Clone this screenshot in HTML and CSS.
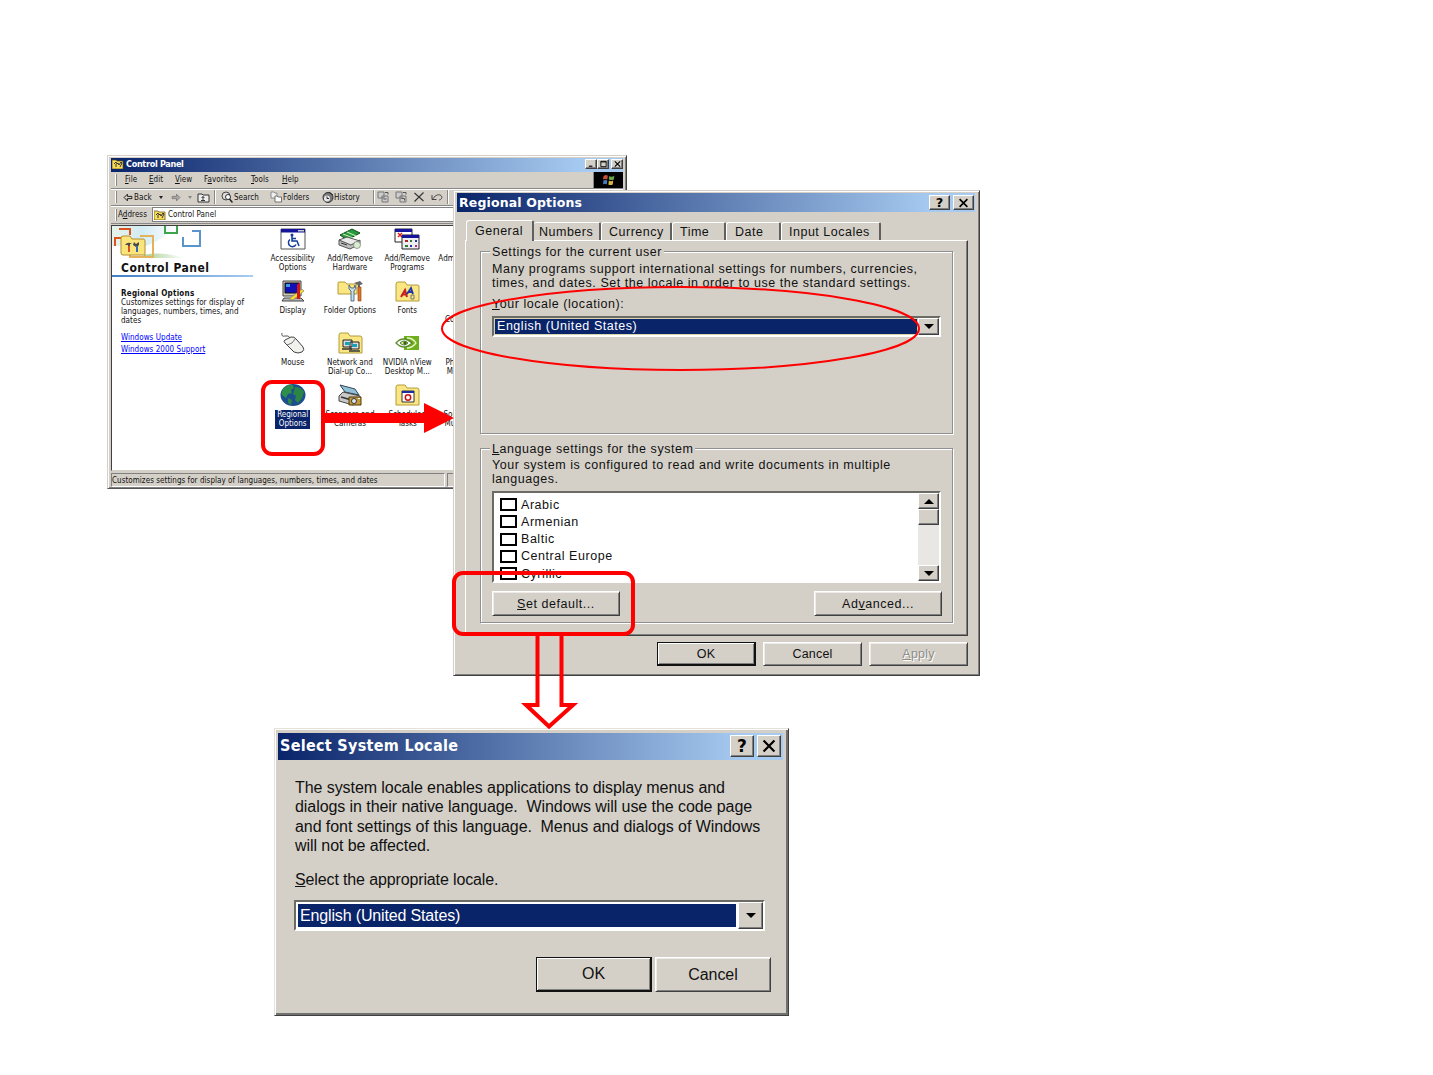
FILE: index.html
```html
<!DOCTYPE html>
<html lang="en">
<head>
  <meta charset="UTF-8">
  <title>Regional Options</title>
  <link rel="stylesheet" href="styles.css">
</head>
<body>

  <!-- Control Panel window -->
  <div class="window panel">
    <div class="titlebar">
      <svg class="title-icon" viewBox="0 0 12 10"><path d="M0 1h4l1 1h6v8H0z" fill="#f7dc5a" stroke="#5b4a10" stroke-width=".7"/><path d="M2 5l2-2 1 2 1-1 1 2 2-3 1 1-2 4M4 5v3" fill="none" stroke="#333"/></svg>
      <span class="title">Control Panel</span>
      <div class="win-buttons">
        <span class="wbtn"><svg viewBox="0 0 10 9"><path d="M2 7h4" stroke="#000" stroke-width="1.300"/></svg></span>
        <span class="wbtn"><svg viewBox="0 0 10 9"><path d="M2 1.500h6v6H2zM2 2.200h6" fill="none" stroke="#000"/></svg></span>
        <span class="wbtn close"><svg viewBox="0 0 10 9"><path d="M2 1.500l6 6M8 1.500l-6 6" stroke="#000" stroke-width="1.300"/></svg></span>
      </div>
    </div>
    <div class="menu-row">
      <div class="menubar">
        <i class="grip"></i>
        <span class="m-file"><u>F</u>ile</span><span class="m-edit"><u>E</u>dit</span><span class="m-view"><u>V</u>iew</span><span class="m-fav">F<u>a</u>vorites</span><span class="m-tools"><u>T</u>ools</span><span><u>H</u>elp</span>
      </div>
      <div class="brand"><svg viewBox="0 0 16 12"><path d="M2 3q2-2 4-.5L5.500 6q-2-1-4 0z" fill="#c8503c"/><path d="M7 3q3 1 5-.5L11.500 6q-2 1-4.500 0z" fill="#6aa84a"/><path d="M2 7q2-1 3.500 0L5 10.500q-2-1-3.500 0z" fill="#4a7cc8"/><path d="M7 7q2 1 4 0l-.5 3.500q-2 1-4 0z" fill="#d8b840"/></svg></div>
    </div>
    <div class="toolbar">
      <i class="grip"></i>
      <span class="tool back"><svg class="ic9" viewBox="0 0 9 8"><path d="M4 1L1 4l3 3V5h4V3H4z" fill="none" stroke="#222" stroke-width=".9"/></svg>Back <b class="tri"></b></span>
      <span class="tool fwd"><svg class="ic9" viewBox="0 0 9 8"><path d="M5 1l3 3-3 3V5H1V3h4z" fill="#aaa" stroke="#666" stroke-width=".6"/></svg><b class="tri dim"></b></span>
      <svg class="up" viewBox="0 0 13 11"><path d="M1 2h4l1 1h6v7H1z" fill="#eee" stroke="#333"/><path d="M4 8.500h4M6 8.500V4.500M4.500 6L6 4.500 7.500 6" fill="none" stroke="#222" stroke-width=".9"/></svg>
      <i class="sep"></i>
      <span class="tool search"><svg class="ic12" viewBox="0 0 12 12"><circle cx="5" cy="5" r="4" fill="#ddd" stroke="#444"/><circle cx="7" cy="6" r="2.500" fill="#fff" stroke="#333"/><path d="M8.500 8l3 3.500" stroke="#222" stroke-width="1.500"/></svg>Search</span>
      <span class="tool folders"><svg class="ic12" viewBox="0 0 12 12"><path d="M1 1h3l1 1h2v5H1z" fill="#eee" stroke="#777" stroke-width=".8"/><path d="M5 5h2l1 1h3.500v5H5z" fill="#fff" stroke="#555" stroke-width=".8"/></svg>Folders</span>
      <span class="tool history"><svg class="ic12" viewBox="0 0 12 12"><circle cx="6" cy="6.500" r="5" fill="#777" stroke="#333"/><circle cx="5" cy="7.500" r="3" fill="#e8e8e8"/><path d="M5 5.500v2h2M7 1l4 3" fill="none" stroke="#222"/></svg>History</span>
      <i class="sep"></i>
      <svg class="ic12 t1" viewBox="0 0 12 12"><path d="M1 1h6v6H1zM5 5h6v6H5z" fill="#ccc" stroke="#777"/><path d="M6.500 8h3M8 1.500h3v2" fill="none" stroke="#555"/></svg>
      <svg class="ic12 t2" viewBox="0 0 12 12"><path d="M1 1h6v6H1zM5 5h6v6H5z" fill="#ccc" stroke="#777"/><path d="M6.500 7.500h3v2M8 1.500h3v2" fill="none" stroke="#555"/></svg>
      <svg class="ic12 t3" viewBox="0 0 12 12"><path d="M1.500 2l9 8M10.500 1.500l-9 9" stroke="#333" stroke-width="1.100"/></svg>
      <svg class="ic12 t4" viewBox="0 0 12 12"><path d="M1 4v4.500h4.500M1.500 8C5 3.500 8 3 10 4.500c2 2 0 4.500-2 4.500" fill="none" stroke="#444"/></svg>
      <i class="sep"></i>
    </div>
    <div class="address">
      <i class="grip"></i>
      <span class="addr-label">A<u>d</u>dress</span>
      <div class="addr-box">
        <svg class="title-icon" viewBox="0 0 12 10"><path d="M0 1h4l1 1h6v8H0z" fill="#f7dc5a" stroke="#5b4a10" stroke-width=".7"/><path d="M2 5l2-2 1 2 1-1 1 2 2-3 1 1-2 4M4 5v3" fill="none" stroke="#333"/></svg>
        Control Panel
      </div>
    </div>
    <div class="content">
      <div class="side">
        <svg class="banner" viewBox="0 0 142 34">
          <defs>
            <linearGradient id="sky" x1="0" x2="1"><stop offset="0" stop-color="#e6f3ea"/><stop offset=".45" stop-color="#d3ebf3"/><stop offset="1" stop-color="#fff"/></linearGradient>
            <linearGradient id="leaf" x1="0" x2="1"><stop offset="0" stop-color="#a9cf94"/><stop offset="1" stop-color="#fff"/></linearGradient>
          </defs>
          <path d="M0 0h66q-16 14-32 20H0z" fill="url(#sky)"/>
          <path d="M32 29q18-4 40 3H32z" fill="url(#leaf)"/>
          <path d="M3 20V12h8M8 4V2M8 3h10v6" fill="none" stroke="#d9541e" stroke-width="2"/>
          <path d="M53 0v7h12V0" fill="none" stroke="#3fa54c" stroke-width="2"/>
          <path d="M80 5h8v15H71v-9" fill="none" stroke="#5a94cd" stroke-width="2"/>
          <path d="M28 10h13v21H18v-5" fill="none" stroke="#e3b35c" stroke-width="2"/>
          <path d="M9 12q0-2 2-2h7l2 3h11q2 0 2 2v14H11q-2 0-2-2z" fill="#fae47c" stroke="#b68e2c"/>
          <path d="M13 19q3-4 7-1h-2v3h-2v-2zM22 16l2 2 3-2v3l-2 2h-1l-3-2z" fill="#4a4a4a"/>
          <path d="M17 20v6" stroke="#d9541e" stroke-width="2"/><path d="M25 20v6" stroke="#3a68b0" stroke-width="2"/>
        </svg>
        <div class="side-title">Control Panel</div>
        <div class="side-line"></div>
        <div class="side-text"><b>Regional Options</b><br>Customizes settings for display of<br>languages, numbers, times, and<br>dates</div>
        <div class="side-links"><a>Windows Update</a><a>Windows 2000 Support</a></div>
      </div>
      <div class="icons">
        <div class="item"><svg viewBox="0 0 26 22"><path d="M1 1h24v20H1z" fill="#fff" stroke="#555"/><path d="M1 1h24v3.500H1z" fill="#14149c"/><path d="M18 2h6v1.500h-6z" fill="#ccc"/><circle cx="12" cy="7" r="1.500" fill="#123a9c"/><path d="M12 8v5h5l2 5M12 10.500h4M10 11.500a4 4 0 1 0 6 5" fill="none" stroke="#123a9c" stroke-width="1.500"/></svg><span>Accessibility<br>Options</span></div>
        <div class="item"><svg viewBox="0 0 26 22"><path d="M3 7L15 1l8 4-13 7z" fill="#269a3c" stroke="#154d1e"/><path d="M6 6l10 4M10 4l9 4" stroke="#bfe8b0" stroke-width="1.200"/><path d="M2 12l8-3 13 4-8 6z" fill="#e9e9e9" stroke="#555"/><path d="M2 12v5l11 4 10-5v-4l-9 5z" fill="#bdbdbd" stroke="#555"/><path d="M4 15l6 2" stroke="#333"/><circle cx="20" cy="17" r="3.500" fill="#d9eecb" stroke="#777" stroke-width=".7"/></svg><span>Add/Remove<br>Hardware</span></div>
        <div class="item"><svg viewBox="0 0 26 22"><path d="M1 1h17v13H1z" fill="#fff" stroke="#222"/><path d="M1 1h17v3H1z" fill="#14149c"/><path d="M4 5l4 4M8 5L4 9" stroke="#d22" stroke-width="1.500"/><path d="M8 7h17v14H8z" fill="#eee" stroke="#222"/><path d="M8 7h17v3H8z" fill="#14149c"/><path d="M11 12h3v2h-3z" fill="#a22"/><path d="M16 12h2v2h-2zM11 17h3v2h-3z" fill="#2a7d33"/><path d="M21 12h2v2h-2zM16 17h2v2h-2z" fill="#2432b4"/><path d="M21 17h2v2h-2z" fill="#b32a8c"/></svg><span>Add/Remove<br>Programs</span></div>
        <div class="item"><svg viewBox="0 0 26 22"><path d="M2 4h9l2 2h11v15H2z" fill="#fae784" stroke="#a89030"/></svg><span>Administrative<br>Tools</span></div>

        <div class="item"><svg viewBox="0 0 26 22"><path d="M3 1h18v15H3z" fill="#cfc9b4" stroke="#444"/><path d="M5 3h14v10H5z" fill="#1010b8" stroke="#111"/><path d="M6 4h4v3H6z" fill="#3c9be0"/><path d="M4 18h17l3 3H2z" fill="#bbb" stroke="#444"/><path d="M9 19L22 9l2 2-11 9z" fill="#f4df2c" stroke="#777" stroke-width=".6"/><path d="M17 5l3-3v17h-3z" fill="#d31818"/></svg><span>Display</span></div>
        <div class="item"><svg viewBox="0 0 26 22"><path d="M1 3q0-1 1-1h6l2 2h9q1 0 1 1v9H1z" fill="#fae784" stroke="#b39c3a"/><path d="M12 5q-1 5 2 6v10h3V11q3-2 1-6l-1 3h-3z" fill="#c7e0ee" stroke="#37506a" stroke-width=".8"/><path d="M17 3l6-2 3 3-3 1v2h-2V5z" fill="#666"/><path d="M21 7h3v14h-3z" fill="#e0742c" stroke="#8b3c0c" stroke-width=".6"/></svg><span>Folder Options</span></div>
        <div class="item"><svg viewBox="0 0 26 22"><path d="M2 4q0-2 2-2h7l2 3h10q2 0 2 1v15H2z" fill="#fae784" stroke="#b39c3a"/><path d="M7 17l4-7 2 7M8.500 14.500h4" fill="none" stroke="#c81e1e" stroke-width="2"/><path d="M13 14l4-6 2 6M14.500 12h4" fill="none" stroke="#1c36b0" stroke-width="1.800"/><path d="M17 15h3v4h-3z" fill="none" stroke="#777"/></svg><span>Fonts</span></div>
        <div class="item"><svg viewBox="0 0 26 22"><path d="M4 10h18v9H4z" fill="#bbb" stroke="#555"/></svg><span>Game<br>Controllers</span></div>

        <div class="item"><svg viewBox="0 0 26 22"><path d="M10 6Q9 3 5 4T2 1" fill="none" stroke="#555"/><path d="M5 8l6-3q3-1 6 3l6 7q2 3-1 5-4 2-8 0L5 11q-2-2 0-3z" fill="#f1f1ee" stroke="#444"/><path d="M7 13q6-1 8-6" fill="none" stroke="#777"/></svg><span>Mouse</span></div>
        <div class="item"><svg viewBox="0 0 26 22"><path d="M2 3q0-2 2-2h7l2 3h10q2 0 2 2v15H2z" fill="#fae784" stroke="#b39c3a"/><path d="M6 8h9v7H6zM13 10h9v7h-9z" fill="#ddd" stroke="#222"/><path d="M8 10h5v3H8zM15 12h5v3h-5z" fill="#18a0b4"/><path d="M5 17h10M12 19h11" stroke="#333" stroke-width="1.500"/></svg><span>Network and<br>Dial-up Co...</span></div>
        <div class="item"><svg viewBox="0 0 26 22"><path d="M10 4h15v14H10z" fill="#6fae1c"/><path d="M2 11q7-8 16 0-8 8-16 0z" fill="#fff" stroke="#5c8c2c" stroke-width="1.300"/><path d="M6 11q4-4 8 0-4 4-8 0z" fill="#d8ebb0" stroke="#54822a"/><circle cx="11" cy="11" r="1.700" fill="#3c5f16"/><path d="M13 6q6 0 9 5-4 5-9 5" fill="none" stroke="#e6f5c8" stroke-width="1.300"/></svg><span>NVIDIA nView<br>Desktop M...</span></div>
        <div class="item"><svg viewBox="0 0 26 22"><path d="M4 10h18v9H4z" fill="#bbb" stroke="#555"/></svg><span>Phone and<br>Modem ...</span></div>

        <div class="item selected"><svg viewBox="0 0 26 22"><ellipse cx="13" cy="11" rx="12.500" ry="11" fill="#1d4f8e"/><path d="M4 4q4-4 9-3l1 3-3 2 1 3-4 1-2 4-4-3q-1-4 2-7z" fill="#2e8f4a"/><path d="M15 3q6 0 9 5l-2 6-4 5-3-3 1-4-3-2 1-3z" fill="#2b8546"/><path d="M8 14l4 2-1 5-3-2z" fill="#2b8546"/></svg><span>Regional<br>Options</span></div>
        <div class="item"><svg viewBox="0 0 26 22"><path d="M3 1l15 4 4 6-14-3z" fill="#8fc1d8" stroke="#345"/><path d="M2 12l4-4 17 4v5l-7 4-14-4z" fill="#c9c9c9" stroke="#444"/><path d="M4 13l14 4" stroke="#333" stroke-width="1.500"/><path d="M12 13h12v8H12z" fill="#c79b3c" stroke="#4e3a08"/><circle cx="17" cy="17" r="2.500" fill="#dce8ee" stroke="#333"/><path d="M21 14.500h2" stroke="#fff"/></svg><span>Scanners and<br>Cameras</span></div>
        <div class="item"><svg viewBox="0 0 26 22"><path d="M2 3q0-2 2-2h7l2 3h10q2 0 2 2v15H2z" fill="#fae784" stroke="#b39c3a"/><path d="M8 7h12v11H8z" fill="#fff" stroke="#333"/><path d="M8 7h12v2H8z" fill="#1a2fa0"/><circle cx="14" cy="13.500" r="2.700" fill="#fff" stroke="#c11" stroke-width="1.500"/></svg><span>Scheduled<br>Tasks</span></div>
        <div class="item"><svg viewBox="0 0 26 22"><path d="M2 8l8-4v14l-8-4z" fill="#f3e9a0" stroke="#bbb071"/></svg><span>Sounds and<br>Multimedia</span></div>
      </div>
    </div>
    <div class="status">
      <div class="status-text">Customizes settings for display of languages, numbers, times, and dates</div>
      <div class="status-cell"></div>
    </div>
  </div>

  <!-- Regional Options dialog -->
  <div class="window regional">
    <div class="titlebar">
      <span class="title">Regional Options</span>
      <div class="win-buttons">
        <span class="wbtn help">?</span>
        <span class="wbtn"><svg viewBox="0 0 10 9"><path d="M1.500 1l7 7M8.500 1l-7 7" stroke="#000" stroke-width="1.500"/></svg></span>
      </div>
    </div>
    <div class="tabs">
      <div class="tab active">General</div>
      <div class="tab numbers">Numbers</div>
      <div class="tab currency">Currency</div>
      <div class="tab time">Time</div>
      <div class="tab date">Date</div>
      <div class="tab locales">Input Locales</div>
    </div>
    <div class="page">
      <div class="group user">
        <span class="legend">Settings for the current user</span>
        <p>Many programs support international settings for numbers, currencies,<br>times, and dates. Set the locale in order to use the standard settings.</p>
        <label><u>Y</u>our locale (location):</label>
        <div class="select"><span>English (United States)</span><i class="drop"><b></b></i></div>
      </div>
      <div class="group system">
        <span class="legend"><u>L</u>anguage settings for the system</span>
        <p>Your system is configured to read and write documents in multiple<br>languages.</p>
        <div class="list">
          <div class="rows">
            <div class="row"><i></i>Arabic</div>
            <div class="row"><i></i>Armenian</div>
            <div class="row"><i></i>Baltic</div>
            <div class="row"><i></i>Central Europe</div>
            <div class="row"><i></i>Cyrillic</div>
          </div>
          <div class="scroll"><i class="sb"><b class="upb"></b></i><i class="thumb"></i><i class="track"></i><i class="sb"><b></b></i></div>
        </div>
        <div class="actions">
          <div class="btn"><span><u>S</u>et default...</span></div>
          <div class="btn"><span>Ad<u>v</u>anced...</span></div>
        </div>
      </div>
    </div>
    <div class="footer">
      <div class="btn default">OK</div>
      <div class="btn">Cancel</div>
      <div class="btn disabled"><span><u>A</u>pply</span></div>
    </div>
  </div>

  <!-- Select System Locale dialog -->
  <div class="window locale">
    <div class="titlebar">
      <span class="title">Select System Locale</span>
      <div class="win-buttons">
        <span class="wbtn help">?</span>
        <span class="wbtn"><svg viewBox="0 0 10 9"><path d="M1.500 1l7 7M8.500 1l-7 7" stroke="#000" stroke-width="1.400"/></svg></span>
      </div>
    </div>
    <p>The system locale enables applications to display menus and<br>dialogs in their native language.&nbsp; Windows will use the code page<br>and font settings of this language.&nbsp; Menus and dialogs of Windows<br>will not be affected.</p>
    <label><u>S</u>elect the appropriate locale.</label>
    <div class="select"><span>English (United States)</span><i class="drop"><b></b></i></div>
    <div class="footer">
      <div class="btn default">OK</div>
      <div class="btn">Cancel</div>
    </div>
  </div>

  <!-- red marks -->
  <svg class="marks" width="1433" height="1075" viewBox="0 0 1433 1075" fill="none" stroke="#f00" stroke-width="4">
    <rect x="263" y="382" width="60" height="72" rx="9"/>
    <path d="M324 413H424V403L454 418L424 433V423H324Z" fill="#f00" stroke="none"/>
    <ellipse cx="680.500" cy="328.500" rx="238.500" ry="41.500" stroke-width="2"/>
    <rect x="454" y="573" width="179" height="61" rx="9"/>
    <path d="M537.500 634V705H526L549 726.500L573 705H561.500V634"/>
  </svg>

</body>
</html>
```

FILE: styles.css
```css
* { box-sizing: border-box; }
body { margin: 0; width: 1433px; height: 1075px; background: #fff; position: relative; overflow: hidden; color: #111; font-family: "Liberation Sans", Arial, sans-serif; }
i, b.tri { font-style: normal; display: block; flex: none; }
p { margin: 0; }
svg { display: block; flex: none; }
u { text-underline-offset: 1px; text-decoration-thickness: 1px; }

.window { position: absolute; background: #d4d0c8; display: flex; flex-direction: column; white-space: nowrap; }
.titlebar { display: flex; align-items: center; background: linear-gradient(90deg, #0a246a, #a6caf0 92%); color: #fff; font-family: "DejaVu Sans Condensed", "DejaVu Sans", sans-serif; font-weight: bold; flex: none; }
.win-buttons { display: flex; margin-left: auto; }
.wbtn { display: flex; align-items: center; justify-content: center; background: #d4d0c8; border: 1px solid; border-color: #fff #404040 #404040 #fff; box-shadow: inset -1px -1px #808080; color: #000; }
.marks { position: absolute; left: 0; top: 0; }

/* control panel */
.panel { left: 107px; top: 155px; width: 520px; height: 334px; border: 1px solid; border-color: #d4d0c8 #404040 #555 #d4d0c8; box-shadow: inset 1px 1px #fff, inset -1px -1px #808080; padding: 2px 3px 1px 3px; font-family: "DejaVu Sans Condensed", "DejaVu Sans", sans-serif; font-size: 8px; letter-spacing: 0.04px; }
.panel .titlebar { height: 14px; padding: 0 0 2px 1px; font-size: 9px; letter-spacing: -0.3px; }
.title-icon { width: 12px; height: 10px; margin-right: 2px; }
.panel .wbtn { width: 12px; height: 10px; }
.panel .wbtn svg { width: 9px; height: 8px; }
.panel .close { margin-left: 2px; }
.grip { width: 2px; height: 12px; border-left: 1px solid #fff; border-right: 1px solid #888; }
.menu-row { display: flex; height: 17px; border-bottom: 1px solid #888; }
.menubar { display: flex; align-items: center; flex: 1; padding-left: 4px; border-right: 1px solid #888; }
.m-file { margin-left: 8px; width: 24px; }
.m-edit { width: 26px; }
.m-view { width: 29px; }
.m-fav { width: 47px; }
.m-tools { width: 31px; }
.brand { width: 29px; background: #000; }
.brand svg { width: 18px; height: 13px; margin: 1px 0 0 7px; }
.toolbar { display: flex; align-items: center; height: 17px; padding-left: 4px; border-top: 1px solid #fff; border-bottom: 1px solid #888; }
.tool { display: flex; align-items: center; }
.ic9 { width: 10px; height: 9px; }
.ic12 { width: 12px; height: 12px; }
.tri { width: 0; height: 0; border: 2px solid transparent; border-top: 3px solid #222; border-bottom: 0; margin-left: 7px; }
.dim { border-top-color: #888; }
.back { margin-left: 6px; width: 48px; }
.back .ic9 { margin-right: 1px; }
.fwd { width: 26px; }
.up { width: 13px; height: 11px; }
.sep { width: 2px; height: 14px; border-left: 1px solid #888; border-right: 1px solid #fff; margin: 0 5px 0 4px; }
.search { width: 49px; gap: 1px; }
.folders { width: 52px; gap: 1px; }
.history { width: 41px; }
.toolbar .history + .sep { margin: 0 2px 0 10px; }
.t1 { margin-right: 6px; }
.t2 { margin-right: 6px; }
.t3 { margin-right: 6px; }
.address { display: flex; align-items: center; height: 18px; padding-left: 4px; border-top: 1px solid #fff; border-bottom: 1px solid #888; }
.addr-label { width: 34px; margin-left: 1px; }
.addr-box { display: flex; align-items: center; flex: 1; height: 15px; background: #fff; border: 1px solid #808080; padding-left: 1px; }
.content { display: flex; height: 248px; margin-top: 1px; background: #fff; border: 1px solid #404040; border-bottom-color: #d4d0c8; }
.side { width: 145px; flex: none; }
.banner { width: 142px; height: 34px; }
.side-title { margin: 1px 0 0 9px; height: 14px; line-height: 15px; font-size: 12px; font-weight: bold; letter-spacing: 0.5px; }
.side-line { width: 141px; height: 2px; background: linear-gradient(90deg, #3f7fc4, #a8cdf0); }
.side-text { margin: 12px 0 0 9px; line-height: 9px; }
.side-text b { letter-spacing: 0.25px; }
.side-links { margin: 7px 0 0 9px; display: flex; flex-direction: column; align-items: flex-start; }
.side-links a { color: #00f; text-decoration: underline; line-height: 12px; }
.icons { display: grid; grid-template-columns: repeat(4, 57.3px); grid-auto-rows: 52px; margin-left: 7px; padding-top: 2px; }
.item { display: flex; flex-direction: column; align-items: center; text-align: center; line-height: 9px; letter-spacing: 0; }
.item svg { width: 26px; height: 22px; margin-bottom: 4px; }
.item span { padding: 0 1px; }
.selected span { background: #0a246a; color: #fff; padding: 0 2px 1px; }
.status { display: flex; height: 14px; margin-top: 2px; gap: 2px; }
.status-text { width: 334px; line-height: 13px; border: 1px solid; border-color: #808080 #fff #fff #808080; }
.status-cell { flex: 1; border: 1px solid; border-color: #808080 #fff #fff #808080; }

/* shared controls */
.btn { display: flex; align-items: center; justify-content: center; background: #d4d0c8; border: 1px solid; border-color: #fff #404040 #404040 #fff; box-shadow: inset 1px 1px #eeece8, inset -1px -1px #808080; }
.default { border: 1px solid #111; border-right-width: 2px; border-bottom-width: 2px; box-shadow: inset 1px 1px #fff, inset -1px -1px #808080; }
.disabled { color: #8f8d88; text-shadow: 1px 1px #fff; }
.select { display: flex; background: #fff; border: 2px solid; border-color: #6b6b66 #fff #fff #6b6b66; }
.select span { flex: 1; background: #0a246a; color: #fff; border: 1px solid #d8d4b0; }
.drop, .sb { display: flex; align-items: center; justify-content: center; background: #d4d0c8; border: 1px solid; border-color: #fff #404040 #404040 #fff; box-shadow: inset -1px -1px #808080; }
.drop b, .sb b { border: 5px solid transparent; border-top: 5px solid #000; border-bottom: 0; }
.help { font-family: "DejaVu Sans", sans-serif; font-weight: bold; }

/* regional options */
.regional { left: 453px; top: 190px; width: 527px; height: 486px; border: 1px solid; border-color: #d4d0c8 #404040 #404040 #d4d0c8; box-shadow: inset 1px 1px #fff, inset -1px -1px #808080; padding: 2px 4px 0 3px; font-size: 12.5px; letter-spacing: 0.54px; }
.regional .titlebar { height: 19px; padding: 0 1px 0 2px; font-family: "DejaVu Sans", sans-serif; font-size: 12.5px; letter-spacing: 0.15px; }
.regional .win-buttons { gap: 3px; }
.regional .wbtn { width: 21px; height: 15px; font-size: 13px; }
.regional .wbtn svg { width: 13px; height: 10px; }
.tabs { display: flex; align-items: flex-end; height: 28px; margin: 0 4px 0 9px; letter-spacing: 0.5px; }
.tab { height: 18px; line-height: 18px; padding-left: 6px; border-top: 1px solid #fff; border-right: 2px solid #606060; border-left: 1px solid #fff; border-radius: 3px 2px 0 0; }
.tab.active { width: 68px; height: 21px; line-height: 20px; padding-left: 8px; position: relative; margin-bottom: -1px; background: #d4d0c8; z-index: 1; }
.numbers { width: 67px; padding-left: 5px; border-left: 0; }
.currency { width: 71px; padding-left: 7px; }
.time { width: 54px; padding-left: 7px; }
.date { width: 55px; padding-left: 8px; }
.locales { width: 100px; padding-left: 7px; }
.page { height: 396px; width: 503px; margin-left: 8px; border: 1px solid; border-color: #fff #404040 #404040 #fff; box-shadow: inset -1px -1px #808080; padding: 10px 14px 0 14px; }
.group { border: 1px solid #909090; box-shadow: 1px 1px #fff, inset 1px 1px #fff; padding: 0 11px; position: relative; }
.group.user { height: 183px; }
.group.system { height: 175px; margin-top: 14px; }
.legend { display: table; background: #d4d0c8; line-height: 14px; margin: -7px 0 0 -2px; padding: 0 2px; position: relative; }
.regional p { line-height: 13.5px; margin-top: 4px; }
.regional label { display: block; line-height: 14px; margin-top: 7px; }
.regional .select { width: 449px; height: 21px; margin-top: 5px; }
.regional .select span { line-height: 15px; padding-left: 2px; }
.regional .drop { width: 21px; }
.system p { margin-top: 3px; }
.list { display: flex; width: 449px; height: 92px; margin-top: 5px; background: #fff; border: 2px solid; border-color: #6b6b66 #fff #fff #6b6b66; overflow: hidden; }
.rows { flex: 1; padding: 3px 0 0 6px; }
.row { display: flex; align-items: center; height: 17.25px; gap: 4px; }
.row i { width: 17px; height: 13px; border: 2px solid #000; background: #fff; }
.scroll { width: 21px; display: flex; flex-direction: column; }
.sb { height: 16px; }
.thumb { height: 16px; background: #d4d0c8; border: 1px solid; border-color: #fff #404040 #404040 #fff; box-shadow: inset -1px -1px #808080; }
.track { flex: 1; background: #e9e7e3; }
.sb .upb { border: 5px solid transparent; border-bottom: 5px solid #000; border-top: 0; }
.actions { display: flex; justify-content: space-between; width: 450px; margin-top: 8px; }
.actions .btn { width: 128px; height: 25px; }
.regional .footer { display: flex; gap: 7px; justify-content: flex-end; margin: 6px 7px 0 0; letter-spacing: 0.2px; }
.regional .footer .btn { width: 99px; height: 24px; }

/* select system locale */
.locale { left: 274px; top: 728px; width: 515px; height: 288px; border: 1px solid; border-color: #e4e1d8 #404040 #404040 #e4e1d8; box-shadow: inset 1px 1px #fff, inset -2px -2px #707070; padding: 4px 5px 0 3px; font-size: 16px; letter-spacing: -0.07px; }
.locale .titlebar { height: 27px; padding: 0 2px 2px; font-size: 16px; letter-spacing: 0.3px; }
.locale .win-buttons { gap: 3px; }
.locale .wbtn { width: 24px; height: 22px; font-size: 17px; }
.locale .wbtn svg { width: 16px; height: 14px; }
.locale p { line-height: 19.300px; margin: 18px 0 0 17px; }
.locale label { line-height: 20px; margin: 15px 0 0 17px; letter-spacing: -0.13px; }
.locale .select { width: 471px; height: 31px; margin: 10px 0 0 16px; letter-spacing: -0.15px; }
.locale .select span { padding-left: 2px; border-width: 2px; border-color: #fff; line-height: 24px; }
.locale .drop { width: 25px; }
.locale .footer { display: flex; gap: 3px; justify-content: flex-end; margin: 26px 12px 0 0; }
.locale .btn { width: 116px; height: 35px; }
```
